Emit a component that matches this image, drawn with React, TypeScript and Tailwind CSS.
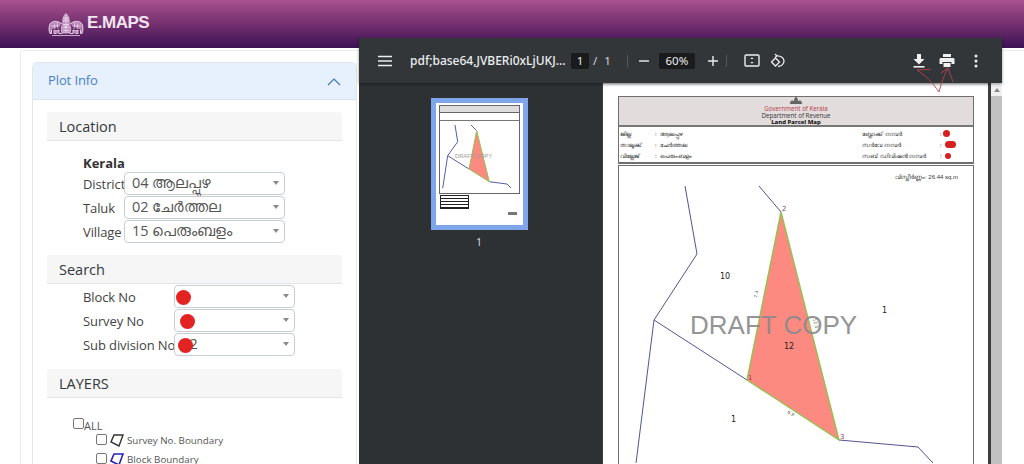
import React from "react";

const Caret = () => (
  <span className="ml-auto mr-[5px] w-0 h-0 border-l-[3px] border-r-[3px] border-t-[4px] border-l-transparent border-r-transparent border-t-[#8a8a8a]" />
);

const Field = ({ label, value, labelW, selW, dotX }: { label: string; value?: string; labelW: string; selW: string; dotX?: string }) => (
  <div className="flex items-center h-[24px]">
    <div className={`${labelW} pt-[3px] text-[13px] tracking-[-0.1px] text-[#444] whitespace-nowrap`}>{label}</div>
    <div className={`${selW} relative h-[23px] flex items-center border border-[#c9ced3] rounded-[4px] bg-white pl-[7px] text-[14.5px] text-[#555]`}>
      <span className="whitespace-nowrap">{value}</span>
      <Caret />
      {dotX && <span className={`absolute ${dotX} top-[4px] w-[15px] h-[15px] rounded-full bg-[#e32222]`} />}
    </div>
  </div>
);

const SectionHead = ({ title }: { title: string }) => (
  <div className="h-[29px] bg-[#f6f6f6] border-b border-[#e4e4e4] flex items-center pl-3 pt-[2px] text-[14.5px] font-medium text-[#33383d] rounded-t-[3px]">{title}</div>
);

const Emblem = () => (
  <svg width="36" height="25" viewBox="0 0 36 25" fill="none" stroke="#efdcef" strokeWidth="0.7">
    <path d="M14 21 C12.5 16 13.5 13.5 15 12.5 C14 8 15.5 3.5 18 1.5 C20.5 3.5 22 8 21 12.5 C22.5 13.5 23.5 16 22 21 Z" fill="#c08fc0" />
    <path d="M14 12 C9 8 4 9 2 12 C0.5 15 1 20 2 21.5 L3.5 21.5 L3.5 18 M14 21.5 H11 V18 C9 19 7 19 6 18 V21.5 H8.5" fill="#b47fb5" strokeWidth="0.9" />
    <path d="M22 12 C27 8 32 9 34 12 C35.5 15 35 20 34 21.5 L32.5 21.5 L32.5 18 M22 21.5 H25 V18 C27 19 29 19 30 18 V21.5 H27.5" fill="#b47fb5" strokeWidth="0.9" />
    <path d="M4 23.5 H32 M6 11 L7 17 M9 10 L10 17 M30 11 L29 17 M27 10 L26 17 M3 14 H12 M33 14 H24 M18 3 V20 M15.5 6 H20.5 M15 9 H21 M15 12.5 H21 M15 15.5 H21 M15 18.5 H21" stroke="#f1e4f1" />
    <path d="M16 6 L18 9 L20 6 M16 12.5 L18 15.5 L20 12.5" stroke="#f1e4f1" />
  </svg>
);

const PageHeader = () => (
  <div className="border-2 border-[#6f6f6f] border-l-[1px] border-r-[1px] border-t-[1px]">
    <div className="h-[30px] bg-[#e2dcdc] border-b-2 border-[#777] flex flex-col items-center text-[6.2px] leading-[7px] text-[#333] relative">
      <svg width="14" height="9" viewBox="0 0 14 9" className="mt-[-1px] shrink-0">
        <path d="M1 8 C1 4 3 4 5 5 C5 3 6 1 7 1 C8 1 9 3 9 5 C11 4 13 4 13 8 Z" fill="#666" />
      </svg>
      <span className="text-[#b33a44]">Government of Kerala</span>
      <span>Department of Revenue</span>
      <span className="font-bold text-[6px] text-black">Land Parcel Map</span>
    </div>
    <div className="h-[35px] flex text-[6px] text-[#333] pl-[1px] pr-[8px] py-[1px] leading-[8px]">
      <div className="flex flex-col justify-around w-[242px]">
        <div className="flex"><span className="w-[35px]">ജില്ല</span><span className="w-[5px]">:</span><span>ആലപ്പുഴ</span></div>
        <div className="flex"><span className="w-[35px]">താലൂക്ക്</span><span className="w-[5px]">:</span><span>ചേർത്തല</span></div>
        <div className="flex"><span className="w-[35px]">വില്ലേജ്</span><span className="w-[5px]">:</span><span>പെരുംബളം</span></div>
      </div>
      <div className="flex flex-col justify-around flex-1">
        <div className="flex items-center"><span className="w-[78px] whitespace-nowrap">ബ്ലോക്ക് നമ്പർ</span><span className="w-[3px]">:</span><span className="w-[7px] h-[7px] rounded-full bg-[#d81f1f]" /></div>
        <div className="flex items-center"><span className="w-[78px] whitespace-nowrap">സർവേ നമ്പർ</span><span className="w-[5px]">:</span><span className="w-[11px] h-[7px] rounded-full bg-[#d81f1f]" /></div>
        <div className="flex items-center"><span className="w-[78px] whitespace-nowrap">സബ് ഡിവിഷൻ നമ്പർ</span><span className="w-[5px]">:</span><span className="w-[6px] h-[6px] rounded-full bg-[#d81f1f]" /></div>
      </div>
    </div>
  </div>
);

const MapSvg = () => (
  <svg width="354" height="298" viewBox="619 167 354 298" className="block">
    <g fill="none" stroke="#3f3f86" strokeWidth="0.9">
      <path d="M685 187 L697 255 L654 321 L636 464" />
      <path d="M654 321 L747 381" />
      <path d="M759 187 L781 213" />
      <path d="M839 441 L918 448 L933 464" />
    </g>
    <polygon points="781,213 747,381 839,441" fill="#fd8a80" stroke="#93c14f" strokeWidth="1.4" />
    <text x="690" y="335" fontFamily="Liberation Sans" fontSize="26" fill="#8a8a8a" opacity="0.9">DRAFT COPY</text>
    <g fontFamily="DejaVu Sans" fontSize="8" fill="#222">
      <text x="720" y="280">10</text>
      <text x="882" y="314">1</text>
      <text x="784" y="350">12</text>
      <text x="731" y="423">1</text>
    </g>
    <g fontFamily="DejaVu Sans" fontSize="7" fill="#a8385f">
      <text x="782" y="212">2</text>
      <text x="748" y="381">1</text>
      <text x="840" y="440">3</text>
    </g>
    <g fontFamily="DejaVu Sans" fontSize="4.5" fill="#555">
      <text x="0" y="0" transform="translate(757 299) rotate(-78)">7.4</text>
      <text x="0" y="0" transform="translate(813 320) rotate(75)">12.5</text>
      <text x="0" y="0" transform="translate(787 414) rotate(30)">6.9</text>
    </g>
    <text x="895" y="180" fontFamily="Liberation Sans" fontSize="6" fill="#333">വിസ്തീർണ്ണം: 26.44 sq.m</text>
  </svg>
);

const Thumb = () => (
  <div className="w-[97px] h-[132px] bg-[#7fa6ea] p-[5px]">
    <div className="w-full h-full bg-white pt-[2px] px-[3px] relative">
      <div className="border border-[#666] h-[89px] flex flex-col">
        <div className="h-[7px] bg-[#ddd] border-b border-[#666]" />
        <div className="h-[8px] border-b border-[#777]" />
        <svg viewBox="0 0 79 72" className="w-full h-[72px]">
          <g fill="none" stroke="#4a4a9a" strokeWidth="0.9">
            <path d="M15 4 L17.7 20.7 L7.7 34.7 L2.7 67.3" />
            <path d="M7.7 34.7 L29 48" />
            <path d="M31 4 L36.7 9.7" />
            <path d="M49.3 60.7 L67 63 L71 67" />
          </g>
          <polygon points="36.7,9.7 29,48 49.3,60.7" fill="#fd8a80" stroke="#93c14f" strokeWidth="1" />
          <text x="15" y="37" fontFamily="Liberation Sans" fontSize="5.8" fill="#9a9a9a">DRAFT COPY</text>
        </svg>
      </div>
      <div className="mt-[1px] ml-[1px] w-[29px] h-[14px] border border-[#222] bg-[repeating-linear-gradient(0deg,#222_0,#222_1px,#fff_1px,#fff_3px)]" />
      <div className="absolute right-[6px] bottom-[10px] w-[9px] h-[3px] bg-[#777]" />
    </div>
  </div>
);

const Check = () => (
  <span className="inline-block w-[11px] h-[11px] border border-[#777] rounded-[2px] bg-white shrink-0" />
);

export default function App() {
  return (
    <div className="relative w-[1024px] h-[464px] overflow-hidden bg-white text-[#333] font-['Open_Sans','Noto_Sans',sans-serif]">
      <header className="h-12 flex items-center pl-[48px] gap-[3px] bg-gradient-to-b from-[#a8528e] via-[#75306f] to-[#3c1155]">
        <Emblem />
        <span className="font-['Liberation_Sans',sans-serif] font-bold text-[17px] text-[#f3e6f2] tracking-[-0.5px] mb-[2px]">E.MAPS</span>
      </header>

      <main className="ml-[20px] mt-[2px] h-[414px] border-l border-t border-[#ececec] rounded-tl-[4px] pl-[11px] pt-[11px]">
        <div className="w-[325px] border border-[#e3e6ea] rounded-t-[5px] h-[420px]">
          <div className="h-[37px] bg-[#e7f1fd] border-b border-[#d9e2ee] flex items-center justify-between px-[15px]">
            <span className="text-[13px] tracking-[-0.1px] text-[#4a7fc7]">Plot Info</span>
            <svg width="14" height="9" viewBox="0 0 14 9" fill="none" stroke="#3f78b8" strokeWidth="1.2"><path d="M1 8 L7 2 L13 8" /></svg>
          </div>

          <div className="px-[14px] pt-[12px]">
            <SectionHead title="Location" />
            <div className="pl-[36px] pt-[15px]">
              <div className="h-[15px] flex items-center text-[13px] font-bold text-[#333]">Kerala</div>
              <Field label="District" value="04 ആലപ്പുഴ" labelW="w-[41px]" selW="w-[161px]" />
              <Field label="Taluk" value="02 ചേർത്തല" labelW="w-[41px]" selW="w-[161px]" />
              <Field label="Village" value="15 പെരുംബളം" labelW="w-[41px]" selW="w-[161px]" />
            </div>

            <div className="mt-[12px]"><SectionHead title="Search" /></div>
            <div className="pl-[36px]">
              <Field label="Block No" labelW="w-[91px]" selW="w-[121px]" dotX="left-[1px]" />
              <Field label="Survey No" labelW="w-[91px]" selW="w-[121px]" dotX="left-[5px]" />
              <Field label="Sub division No" value={"\u00a0\u00a02"} labelW="w-[91px]" selW="w-[121px]" dotX="left-[3px]" />
            </div>

            <div className="mt-[13px]"><SectionHead title="LAYERS" /></div>
            <div className="pl-[26px] pt-[20px] text-[11px] text-[#555]">
              <div className="flex items-start h-[12px]"><Check /><span>ALL</span></div>
              <div className="pl-[23px] flex items-center h-[19px] gap-[3px]">
                <Check />
                <svg width="14" height="14" viewBox="0 0 14 14" fill="none" stroke="#333" strokeWidth="1.4"><path d="M4 2 H13 L9 13 L1 9 Z" /></svg>
                <span className="text-[9.8px] mt-[4px]">Survey No. Boundary</span>
              </div>
              <div className="pl-[23px] flex items-center h-[19px] gap-[3px]">
                <Check />
                <svg width="14" height="14" viewBox="0 0 14 14" fill="none" stroke="#2222c0" strokeWidth="1.6"><path d="M4 2 H13 L9 13 L1 9 Z" /></svg>
                <span className="text-[9.8px] mt-[4px]">Block Boundary</span>
              </div>
            </div>
          </div>
        </div>
      </main>

      {/* PDF viewer window floating above the page */}
      <section className="absolute left-[359px] top-[38px] w-[643px] h-[426px] bg-[#2e3134] flex flex-col">
        <div className="h-[45px] bg-[#333639] shadow-[0_1px_3px_rgba(0,0,0,0.4)] flex items-center text-[#eceef0] font-['Noto_Sans',sans-serif] relative z-10">
          <svg width="14" height="12" viewBox="0 0 14 12" className="ml-[19px]" stroke="#eceef0" strokeWidth="1.5"><path d="M0 1.5H14M0 6H14M0 10.5H14" /></svg>
          <span className="ml-[18px] w-[145px] text-[12px] font-medium whitespace-nowrap">pdf;base64,JVBERi0xLjUKJ...</span>
          <span className="ml-[16px] w-[18px] h-[16px] bg-[#191b1c] rounded-[2px] flex items-center justify-center text-[11.5px]">1</span>
          <span className="ml-[4px] text-[11.5px] text-[#d5d7d9]">/</span>
          <span className="ml-[7px] text-[11.5px] text-[#d5d7d9]">1</span>
          <span className="ml-[16px] w-px h-[12px] bg-[#55585b]" />
          <svg width="12" height="12" viewBox="0 0 12 12" className="ml-[10px]" stroke="#eceef0" strokeWidth="1.4"><path d="M1 6H11" /></svg>
          <span className="ml-[9px] w-[36px] h-[16px] bg-[#191b1c] rounded-[2px] flex items-center justify-center text-[11.5px]">60%</span>
          <svg width="12" height="12" viewBox="0 0 12 12" className="ml-[12px]" stroke="#eceef0" strokeWidth="1.4"><path d="M1 6H11M6 1V11" /></svg>
          <span className="ml-[7px] w-px h-[12px] bg-[#55585b]" />
          <svg width="16" height="13" viewBox="0 0 16 13" className="ml-[17px]" fill="none" stroke="#eceef0" strokeWidth="1.4"><rect x="1" y="1" width="14" height="11" rx="1" /><path d="M8 3.2 L6.4 5 H9.6 Z M8 9.8 L6.4 8 H9.6 Z" fill="#eceef0" stroke="none" /></svg>
          <svg width="15" height="15" viewBox="0 0 15 15" className="ml-[10px]" fill="none" stroke="#eceef0" strokeWidth="1.3"><path d="M5 1 L7 3 L5 4.6 M7 2.8 C11 2.6 14 5 14 8 C14 11 11.5 13.5 8 13.5" /><path d="M5.5 5 L9.5 9 L5.5 13 L1.5 9 Z" /></svg>
          <svg width="14" height="16" viewBox="0 0 14 16" className="ml-[127px]" fill="#f0f0f0"><path d="M5 1H9V6H12.5L7 11.5L1.5 6H5Z" /><rect x="1.5" y="13" width="11" height="1.6" /></svg>
          <svg width="16" height="15" viewBox="0 0 16 15" className="ml-[13px]" fill="#f0f0f0"><path d="M4 1H12V4H4Z" /><path d="M2 5H14C15 5 15.5 5.7 15.5 6.5V11H12.5V9H3.5V11H0.5V6.5C0.5 5.7 1 5 2 5Z" /><path d="M4.5 10H11.5V14H4.5Z" /></svg>
          <svg width="4" height="14" viewBox="0 0 4 14" className="ml-[19px]" fill="#f0f0f0"><circle cx="2" cy="2" r="1.5" /><circle cx="2" cy="7" r="1.5" /><circle cx="2" cy="12" r="1.5" /></svg>
          <svg width="42" height="30" viewBox="0 0 42 30" className="absolute left-[556px] top-[28px]" fill="none" stroke="#b6404a" strokeWidth="0.9"><path d="M2 4 L15.7 3.3 M2 4 C10 9 18 17 24 26 C26 18 29 9 33 2 L38 16 M33 2 L26 7" /></svg>
        </div>

        <div className="flex-1 flex min-h-0">
          <aside className="w-[243px] flex flex-col items-center pt-[15px] pr-[3px]">
            <Thumb />
            <span className="mt-[5px] text-[10.5px] text-[#e2e2e2]">1</span>
          </aside>
          <div className="flex-1 flex min-w-0 pl-[1px] bg-[#3a3d40]">
            <div className="flex-1 bg-white pt-[13px] pl-[15px] pr-[14px] shadow-[inset_0_3px_3px_-2px_rgba(0,0,0,0.3)]">
              <PageHeader />
              <div className="border-l border-r border-t border-[#6f6f6f] mt-[1px]">
                <MapSvg />
              </div>
            </div>
            <div className="w-[14px] bg-[#f1f1f1] border-l-[3px] border-[#3c3c3c] flex flex-col items-center">
              <span className="mt-[5px] w-0 h-0 border-l-[3px] border-r-[3px] border-b-[4px] border-l-transparent border-r-transparent border-b-[#8a8a8a]" />
              <div className="mt-[4px] flex-1 w-full bg-[#c1c1c1]" />
            </div>
          </div>
        </div>
      </section>
    </div>
  );
}
